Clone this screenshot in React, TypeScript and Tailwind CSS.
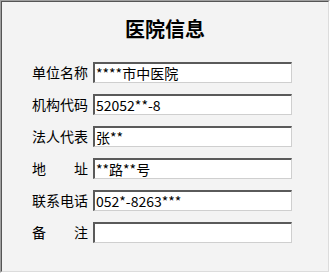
import React from "react";

/* ---------------- DATA ---------------- */

const rows = [
  { label: ["单位名称"], value: "****市中医院" },
  { label: ["机构代码"], value: "52052**-8" },
  { label: ["法人代表"], value: "张**" },
  { label: ["地", "址"], value: "**路**号" },
  { label: ["联系电话"], value: "052*-8263***" },
  { label: ["备", "注"], value: "" },
];

const font = { fontFamily: '"Noto Sans CJK SC", "Noto Sans", sans-serif' };

/* ---------------- COMPONENT ---------------- */

const App = () => {
  return (
    <div
      className="w-[330px] h-[273px] border-t border-l border-t-[#a0a0a0] border-l-[#a0a0a0] border-r border-b border-r-[#ffffff] border-b-[#ffffff]"
      style={font}
    >
      <div className="w-full h-full bg-[#f3f3f3] border-t border-l border-t-[#555555] border-l-[#555555] border-r border-b border-r-[#dcdcdc] border-b-[#dcdcdc]">

        {/* TITLE */}
        <div className="pt-[16px] pl-[-2px] text-center">
          <h1 className="text-[20px] leading-[22px] font-bold text-black">
            医院信息
          </h1>
        </div>

        {/* FORM */}
        <div className="mt-[22px] pl-[30px] flex flex-col gap-[11px]">
          {rows.map((r, i) => (
            <div key={i} className="flex items-center gap-[5px]">

              {/* LABEL */}
              <div className="w-[56px] flex justify-between text-[14px] leading-[21px] text-black">
                {r.label.map((t, j) => (
                  <span key={j}>{t}</span>
                ))}
              </div>

              {/* INPUT */}
              <div className="w-[199px] h-[21px] bg-white border-t-2 border-l-2 border-t-[#5a5a5a] border-l-[#5a5a5a] border-r border-b border-r-[#cfcfcf] border-b-[#cfcfcf] pl-[1px] text-[14px] leading-[18px] text-black whitespace-nowrap overflow-hidden">
                {r.value}
              </div>

            </div>
          ))}
        </div>

      </div>
    </div>
  );
};

export default App;
